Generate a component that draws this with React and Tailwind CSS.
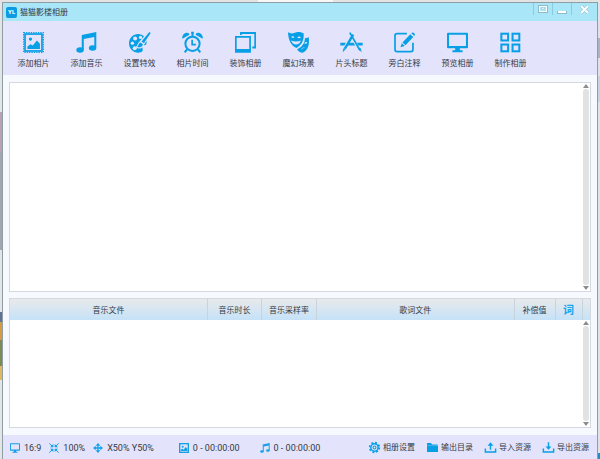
import React, { useState } from 'react';

const ICON = 'size-[21px] overflow-visible fill-[#079fe6] stroke-[#079fe6]';
const SMALL = 'size-[10px] shrink-0 overflow-visible fill-[#159fe8] stroke-[#159fe8]';
const ACTION = 'size-[11px] shrink-0 overflow-visible fill-[#079fe6] stroke-[#079fe6]';

function PhotoIcon({ className }) {
  return (
    <svg viewBox="0 0 62 62" className={className} aria-hidden="true">
      <rect x="2" y="2" width="58" height="58" fill="none" strokeWidth="4" strokeDasharray="4 3" />
      <rect x="6" y="6" width="50" height="50" fill="none" strokeWidth="5" />
      <circle cx="22" cy="21" r="5" stroke="none" />
      <path d="M13 50V43L22 36L29 40L41 25L50 35V50Z" stroke="none" />
    </svg>
  );
}

function SmallPhotoIcon({ className }) {
  return (
    <svg viewBox="0 0 30 30" className={className} aria-hidden="true">
      <rect x="2" y="2" width="26" height="26" fill="none" strokeWidth="4" />
      <circle cx="11" cy="11" r="3" stroke="none" />
      <path d="M5 24V20L10 17L14 20L20 12L25 17V24Z" stroke="none" />
    </svg>
  );
}

function MusicIcon({ className }) {
  return (
    <svg viewBox="0 0 62 62" className={className} aria-hidden="true">
      <path d="M17 9L60 0V46H54V15L23 21V52H17Z" stroke="none" />
      <ellipse cx="12" cy="53" rx="11" ry="8" stroke="none" />
      <ellipse cx="49" cy="47" rx="11" ry="8" stroke="none" />
    </svg>
  );
}

function PaletteIcon({ className }) {
  return (
    <svg viewBox="0 0 62 62" className={className} aria-hidden="true">
      <path
        stroke="none"
        d="M27 6C41 6 52 17 52 31C52 40 45 38 41 41C36 45 43 50 40 56C38 60 32 61 27 61C12 61 0 49 0 34C0 18 12 6 27 6Z"
      />
      <g className="fill-[#e3e4fb]" stroke="none">
        <circle cx="18" cy="19" r="6" />
        <circle cx="34" cy="16" r="5" />
        <circle cx="10" cy="33" r="5" />
        <circle cx="17" cy="48" r="6" />
      </g>
      <path
        className="fill-[#e3e4fb] stroke-[#e3e4fb]"
        strokeWidth="7"
        d="M61 0L63 3L42 35C41 44 32 47 25 44C29 41 27 34 34 30Z"
      />
      <path stroke="none" d="M60 0L64 3L44 33L37 28Z" />
      <path stroke="none" d="M34 31L41 36C40 44 31 47 24 44C29 41 27 34 34 31Z" />
    </svg>
  );
}

function ClockIcon({ className }) {
  return (
    <svg viewBox="0 0 62 62" className={className} aria-hidden="true">
      <circle cx="31" cy="35" r="21" fill="none" strokeWidth="6" />
      <path d="M30 23V37H41" fill="none" strokeWidth="5" />
      <path d="M1 20C-1 10 7 2 15 2C19 2 21 4 22 8Z" stroke="none" />
      <path d="M61 20C63 10 55 2 47 2C43 2 41 4 40 8Z" stroke="none" />
      <path d="M31 3V14M27 2H35M15 51L8 60M47 51L54 60" fill="none" strokeWidth="6" />
    </svg>
  );
}

function FramesIcon({ className }) {
  return (
    <svg viewBox="0 0 62 62" className={className} aria-hidden="true">
      <path stroke="none" fillRule="evenodd" d="M0 12H47V61H0ZM5 17V50H42V17Z" />
      <path stroke="none" d="M15 0H62V49H51V43H57V6H20V9H15Z" />
    </svg>
  );
}

function MasksIcon({ className }) {
  return (
    <svg viewBox="0 0 62 62" className={className} aria-hidden="true">
      <path
        stroke="none"
        fillRule="evenodd"
        d="M0 1C7 5 13 5 20 2C27 -1 36 -1 46 4C48 18 44 37 25 47C9 41 1 24 0 1Z
        M9 15C12 11 17 12 19 16C16 18 12 18 9 15Z M27 16C30 12 36 12 38 16C35 19 31 19 27 16Z
        M9 25C18 29 29 29 38 25C35 34 29 37 24 37C17 37 12 33 9 25Z"
      />
      <path
        stroke="none"
        fillRule="evenodd"
        d="M50 18C54 19 58 17 61 15C64 34 61 53 44 61C36 61 30 57 27 51C42 44 50 33 50 18Z
        M48 33C51 29 54 29 57 31C55 35 52 36 48 33Z M38 53C41 46 46 44 51 47C47 46 43 48 38 53Z"
      />
    </svg>
  );
}

function CompassIcon({ className }) {
  return (
    <svg viewBox="0 0 62 62" className={className} aria-hidden="true">
      <path d="M36 8L11 50" fill="none" strokeWidth="7" />
      <path d="M26 2L56 54" fill="none" strokeWidth="5" />
      <path d="M-2 32H14L10 40H-2ZM24 32H37L42 40H20ZM47 32H64V40H52Z" stroke="none" />
      <path d="M7 48L13 52L5 60Z" stroke="none" />
      <path d="M51 50L58 47L61 60Z" stroke="none" />
    </svg>
  );
}

function EditIcon({ className }) {
  return (
    <svg viewBox="0 0 62 62" className={className} aria-hidden="true">
      <path
        d="M38 5H9Q3 5 3 11V52Q3 58 9 58H50Q56 58 56 52V32"
        fill="none"
        strokeWidth="5"
      />
      <path d="M48 7L57 15L34 39L25 31Z" stroke="none" />
      <path d="M51 4Q55 -1 60 4Q64 8 60 12Z" stroke="none" />
      <path d="M23 33L32 41L19 45Z" stroke="none" />
    </svg>
  );
}

function MonitorIcon({ className }) {
  return (
    <svg viewBox="0 0 62 62" className={className} aria-hidden="true">
      <path
        stroke="none"
        fillRule="evenodd"
        d="M3 2H59Q62 2 62 5V45Q62 48 59 48H38V54H46V60H16V54H24V48H3Q0 48 0 45V5Q0 2 3 2ZM6 8V41H56V8Z"
      />
    </svg>
  );
}

function GridIcon({ className }) {
  return (
    <svg viewBox="0 0 62 62" className={className} aria-hidden="true">
      <g fill="none" strokeWidth="6">
        <rect x="4" y="5" width="20" height="20" />
        <rect x="37" y="5" width="20" height="20" />
        <rect x="4" y="37" width="20" height="20" />
        <rect x="37" y="37" width="20" height="20" />
      </g>
    </svg>
  );
}

function ShrinkIcon({ className }) {
  return (
    <svg viewBox="0 0 30 30" className={className} aria-hidden="true">
      <path d="M1 1L11 11M29 1L19 11M1 29L11 19M29 29L19 19" fill="none" strokeWidth="3" />
      <path d="M13 3V13H3ZM17 3V13H27ZM13 27V17H3ZM17 27V17H27Z" stroke="none" />
    </svg>
  );
}

function MoveIcon({ className }) {
  return (
    <svg viewBox="0 0 30 30" className={className} aria-hidden="true">
      <path d="M15 5V25M5 15H25" fill="none" strokeWidth="4" />
      <path d="M15 0L22 8H8ZM15 30L22 22H8ZM0 15L8 8V22ZM30 15L22 8V22Z" stroke="none" />
    </svg>
  );
}

function GearIcon({ className }) {
  return (
    <svg viewBox="0 0 30 30" className={className} aria-hidden="true">
      <circle cx="15" cy="15" r="13" fill="none" strokeWidth="5" strokeDasharray="5.2 5" />
      <circle cx="15" cy="15" r="10" fill="none" strokeWidth="4" />
      <circle cx="15" cy="15" r="4" fill="none" strokeWidth="3" />
    </svg>
  );
}

function FolderIcon({ className }) {
  return (
    <svg viewBox="0 0 30 30" className={className} aria-hidden="true">
      <path d="M0 3H11L14 7H29V10H0ZM0 11H30V27H0Z" stroke="none" />
    </svg>
  );
}

function UploadIcon({ className }) {
  return (
    <svg viewBox="0 0 30 30" className={className} aria-hidden="true">
      <path d="M1 18V27H29V18M15 21V7" fill="none" strokeWidth="4" />
      <path d="M15 1L23 10H7Z" stroke="none" />
    </svg>
  );
}

function DownloadIcon({ className }) {
  return (
    <svg viewBox="0 0 30 30" className={className} aria-hidden="true">
      <path d="M1 18V27H29V18M15 1V14" fill="none" strokeWidth="4" />
      <path d="M15 21L23 12H7Z" stroke="none" />
    </svg>
  );
}

const tools = [
  { label: '添加相片', Icon: PhotoIcon },
  { label: '添加音乐', Icon: MusicIcon },
  { label: '设置特效', Icon: PaletteIcon },
  { label: '相片时间', Icon: ClockIcon },
  { label: '装饰相册', Icon: FramesIcon },
  { label: '魔幻场景', Icon: MasksIcon },
  { label: '片头标题', Icon: CompassIcon },
  { label: '旁白注释', Icon: EditIcon },
  { label: '预览相册', Icon: MonitorIcon },
  { label: '制作相册', Icon: GridIcon },
];

const actions = [
  { label: '相册设置', Icon: GearIcon },
  { label: '输出目录', Icon: FolderIcon },
  { label: '导入资源', Icon: UploadIcon },
  { label: '导出资源', Icon: DownloadIcon },
];

function TitleBar() {
  return (
    <header className="flex h-[18px] items-center bg-[#a9e6f8] pl-[3px]">
      <span className="flex size-[11px] items-center justify-center rounded-[2px] bg-[#0c9be0] text-[6px] font-bold leading-none text-white">
        YL
      </span>
      <h1 className="ml-[3px] flex-1 leading-3">猫猫影楼相册</h1>
      <div className="flex h-[12px] self-start">
        <button aria-label="菜单" className="flex w-[19px] items-center justify-center border-l border-[#8ccbdc]">
          <svg viewBox="0 0 10 8" className="h-2 w-[10px] fill-none stroke-white">
            <rect x="0.5" y="0.5" width="9" height="7" stroke="#8fb9c6" />
            <rect x="1.5" y="1.5" width="7" height="5" />
            <path d="M3 3H7L5 5Z" fill="#fff" stroke="#8fb9c6" strokeWidth="0.5" />
          </svg>
        </button>
        <button aria-label="最小化" className="flex w-[19px] items-end justify-center border-l border-[#8ccbdc] pb-px">
          <svg viewBox="0 0 10 3" className="h-[3px] w-[10px]">
            <rect width="10" height="3" fill="#8fb9c6" />
            <rect x="1" width="8" height="2" fill="#fff" />
          </svg>
        </button>
        <button aria-label="关闭" className="flex w-[26px] items-center justify-center border-l border-[#8ccbdc]">
          <svg viewBox="0 0 9 9" className="size-[9px] fill-none">
            <path d="M1 1L8 8M8 1L1 8" stroke="#8fb9c6" strokeWidth="3" />
            <path d="M1 1L8 8M8 1L1 8" stroke="#fff" strokeWidth="2" />
          </svg>
        </button>
      </div>
    </header>
  );
}

function ScrollBar() {
  return (
    <div className="flex w-2 flex-col items-center gap-px py-px">
      <button aria-label="向上滚动">
        <svg viewBox="0 0 6 4" className="h-1 w-[6px] fill-[#8c8c8c]">
          <path d="M3 0L6 4H0Z" />
        </svg>
      </button>
      <div className="w-[6px] flex-1 rounded-full bg-[#e2e2e2]" />
      <button aria-label="向下滚动">
        <svg viewBox="0 0 6 4" className="h-1 w-[6px] fill-[#8c8c8c]">
          <path d="M3 4L6 0H0Z" />
        </svg>
      </button>
    </div>
  );
}

function MusicTable() {
  return (
    <section className="flex h-[130px] flex-col border border-[#d3d9de] bg-white">
      <table className="w-full table-fixed border-collapse">
        <colgroup>
          <col />
          <col className="w-[54px]" />
          <col className="w-[55px]" />
          <col />
          <col className="w-[41px]" />
          <col className="w-[27px]" />
          <col className="w-[8px]" />
        </colgroup>
        <thead>
          <tr className="h-[21px] bg-linear-to-b from-[#e8e9eb] to-[#c5e2f8] *:border-r *:border-[#c9d3db] *:p-0 *:font-normal">
            <th>音乐文件</th>
            <th>音乐时长</th>
            <th>音乐采样率</th>
            <th>歌词文件</th>
            <th>补偿值</th>
            <th className="text-[11px] leading-3 text-[#12a5ec]">
              <span className="font-bold">词</span>
            </th>
            <th className="border-r-0!" aria-hidden="true"></th>
          </tr>
        </thead>
      </table>
      <div className="flex flex-1 justify-end">
        <ScrollBar />
      </div>
    </section>
  );
}

function Status({ Icon, children }) {
  return (
    <span className="flex items-center gap-1 whitespace-nowrap">
      <Icon className={SMALL} />
      {children}
    </span>
  );
}

function StatusBar() {
  return (
    <footer className="flex h-6 items-center justify-between bg-[#e3e4fb] pl-[7px] pr-2">
      <div className="flex items-center gap-[25px] pt-px font-[Roboto,sans-serif] text-[9px]">
        <div className="flex items-center gap-2">
          <Status Icon={MonitorIcon}>16:9</Status>
          <Status Icon={ShrinkIcon}>100%</Status>
          <Status Icon={MoveIcon}>X50% Y50%</Status>
        </div>
        <div className="flex items-center gap-5">
          <Status Icon={SmallPhotoIcon}>0 - 00:00:00</Status>
          <Status Icon={MusicIcon}>0 - 00:00:00</Status>
        </div>
      </div>
      <div className="flex items-center gap-3">
        {actions.map(({ label, Icon }) => (
          <button key={label} className="flex items-center gap-[3px] whitespace-nowrap">
            <Icon className={ACTION} />
            {label}
          </button>
        ))}
      </div>
    </footer>
  );
}

// Slivers of the desktop that show past the window's edges
function LeftEdge() {
  return (
    <div className="flex w-[2px] flex-col bg-[#e4e5e7]">
      <div className="h-[110px]" />
      <div className="h-10 bg-[#b9a3b3]" />
      <div className="h-[98px] bg-[#a5a4b0]" />
      <div className="h-[62px]" />
      <div className="h-[10px] bg-[#5d7391]" />
      <div className="h-[18px] bg-[#d69a45]" />
      <div className="h-[26px] bg-[#7c8b56]" />
      <div className="h-[14px] bg-[#dfb85f]" />
    </div>
  );
}

function RightEdge() {
  return (
    <div className="flex w-[2px] flex-col bg-[#dfe2e8]">
      <div className="h-9" />
      <div className="h-5 bg-[#a8b5c8]" />
      <div className="h-[18px]" />
      <div className="h-[26px] bg-[#c9d3e6]" />
      <div className="flex-1" />
      <div className="h-[6px] bg-[#1f8fc4]" />
    </div>
  );
}

function App() {
  const [active, setActive] = useState(null);

  return (
    <div className="flex min-h-screen flex-col bg-[#e3e3e4] font-['Open_Sans','Noto_Sans_CJK_SC',sans-serif] text-[8px] leading-3 text-[#333a44]">
      <div className="flex h-[2px]">
        <div className="w-[43%]" />
        <div className="w-1/8 bg-[#f7f7f8]" />
      </div>
      <div className="flex flex-1">
        <LeftEdge />
        <div className="flex flex-1 flex-col border-x border-t border-[#8f9da5] bg-[#f6fafe]">
          <TitleBar />
          <nav className="flex h-[54px] bg-[#e3e4fb] pl-1 pt-[11px]">
            {tools.map(({ label, Icon }) => (
              <button
                key={label}
                aria-pressed={active === label}
                onClick={() => setActive(label)}
                className="flex w-[53px] flex-col items-center gap-1 self-start whitespace-nowrap"
              >
                <Icon className={ICON} />
                {label}
              </button>
            ))}
          </nav>
          <main className="flex flex-1 flex-col gap-[6px] px-[6px] py-[7px]">
            <section className="flex flex-1 justify-end border border-[#d3d9de] bg-white">
              <ScrollBar />
            </section>
            <MusicTable />
          </main>
          <StatusBar />
        </div>
        <RightEdge />
      </div>
    </div>
  );
}

export default App;
